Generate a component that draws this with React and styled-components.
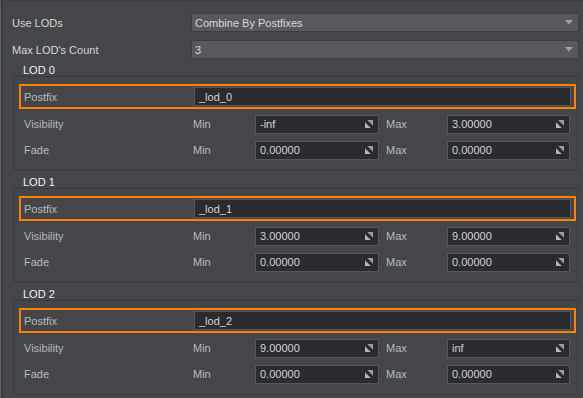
import React from "react";
import styled, { createGlobalStyle } from "styled-components";

const lods = [
    { name: "LOD 0", postfix: "_lod_0", visibility: ["-inf", "3.00000"], fade: ["0.00000", "0.00000"] },
    { name: "LOD 1", postfix: "_lod_1", visibility: ["3.00000", "9.00000"], fade: ["0.00000", "0.00000"] },
    { name: "LOD 2", postfix: "_lod_2", visibility: ["9.00000", "inf"], fade: ["0.00000", "0.00000"] },
];

const GlobalStyle = createGlobalStyle`
    html, body {
        margin: 0;
        padding: 0;
        background: #454649;
    }
    body {
        font-family: "Liberation Sans", Arial, sans-serif;
        font-size: 11px;
    }
`;

const ResizeIcon = () => (
    <svg width="8" height="8" viewBox="0 0 8 8">
        <polygon points="2.2,0 8,0 8,5.8" fill="#9c9d9f" />
        <polygon points="0,2.2 0,8 5.8,8" fill="#b4b5b7" />
    </svg>
);

const ArrowIcon = () => (
    <svg width="8" height="5" viewBox="0 0 8 5">
        <polygon points="0,0 8,0 4,4.5" fill="#a3a4a6" />
    </svg>
);

const App = () => {
    return (
        <>
            <GlobalStyle />
            <Panel>
                <TopRow>
                    <TopLabel>Use LODs</TopLabel>
                    <Dropdown>
                        <span>Combine By Postfixes</span>
                        <ArrowIcon />
                    </Dropdown>
                </TopRow>
                <TopRow>
                    <TopLabel>Max LOD's Count</TopLabel>
                    <Dropdown>
                        <span>3</span>
                        <ArrowIcon />
                    </Dropdown>
                </TopRow>

                {lods.map(lod => (
                    <Section key={lod.name}>
                        <Title>{lod.name}</Title>
                        <GroupBox>
                            <PostfixRow>
                                <Label>Postfix</Label>
                                <Field>{lod.postfix}</Field>
                            </PostfixRow>
                            <RangeRow>
                                <Label>Visibility</Label>
                                <Label>Min</Label>
                                <Field $spin>{lod.visibility[0]}<ResizeIcon /></Field>
                                <span />
                                <Label>Max</Label>
                                <Field $spin>{lod.visibility[1]}<ResizeIcon /></Field>
                            </RangeRow>
                            <RangeRow>
                                <Label>Fade</Label>
                                <Label>Min</Label>
                                <Field $spin>{lod.fade[0]}<ResizeIcon /></Field>
                                <span />
                                <Label>Max</Label>
                                <Field $spin>{lod.fade[1]}<ResizeIcon /></Field>
                            </RangeRow>
                        </GroupBox>
                    </Section>
                ))}
            </Panel>
        </>
    );
}

const Panel = styled.div`
    width: 583px;
    height: 398px;
    box-sizing: border-box;
    overflow: hidden;
    display: flex;
    flex-direction: column;
    padding: 12px 4px 0 11px;
    background: #454649;
    border-top: 1px solid #3d3e41;
    border-left: 1px solid #626366;
    box-shadow: inset 2px 0 0 #38393b;
`

const TopRow = styled.div`
    display: grid;
    grid-template-columns: 179px 1fr;
    align-items: center;
    height: 19px;
    margin-bottom: 8px;

    &:nth-of-type(2) {
        margin-bottom: 5px;
    }
`

const TopLabel = styled.div`
    color: #d6d7d8;
    white-space: nowrap;
`

const Dropdown = styled.div`
    height: 19px;
    box-sizing: border-box;
    display: flex;
    align-items: center;
    justify-content: space-between;
    padding: 0 5px 0 3px;
    background: #58595c;
    border: 1px solid #3c3d40;
    border-radius: 2px;
    color: #d8d9da;
`

const Section = styled.section`
    display: flex;
    flex-direction: column;
    margin: 0 1px 5px 1px;
`

const Title = styled.div`
    height: 12px;
    line-height: 12px;
    padding-left: 10px;
    color: #f2f2f2;
`

const GroupBox = styled.div`
    display: flex;
    flex-direction: column;
    padding: 7px 1px 7px 5px;
    border: 1px solid #393a3d;
    border-radius: 2px;
`

const PostfixRow = styled.div`
    display: grid;
    grid-template-columns: 170px 1fr;
    align-items: center;
    height: 25px;
    box-sizing: border-box;
    padding: 0 3px;
    border: 2px solid #ff8108;
    margin-bottom: 2px;
`

const RangeRow = styled.div`
    display: grid;
    grid-template-columns: 169px 62px 124px 7px 61px 123px;
    align-items: center;
    height: 26px;
    padding: 0 5px;
`

const Label = styled.span`
    color: #b9bcbf;
    white-space: nowrap;
`

const Field = styled.div`
    height: 19px;
    box-sizing: border-box;
    display: flex;
    align-items: center;
    justify-content: space-between;
    padding: 0 ${p => (p.$spin ? "5px" : "4px")} 0 4px;
    background: #2a2b2e;
    border: 1px solid #56575a;
    color: #d2d4d6;
    white-space: nowrap;
`

export default App;
